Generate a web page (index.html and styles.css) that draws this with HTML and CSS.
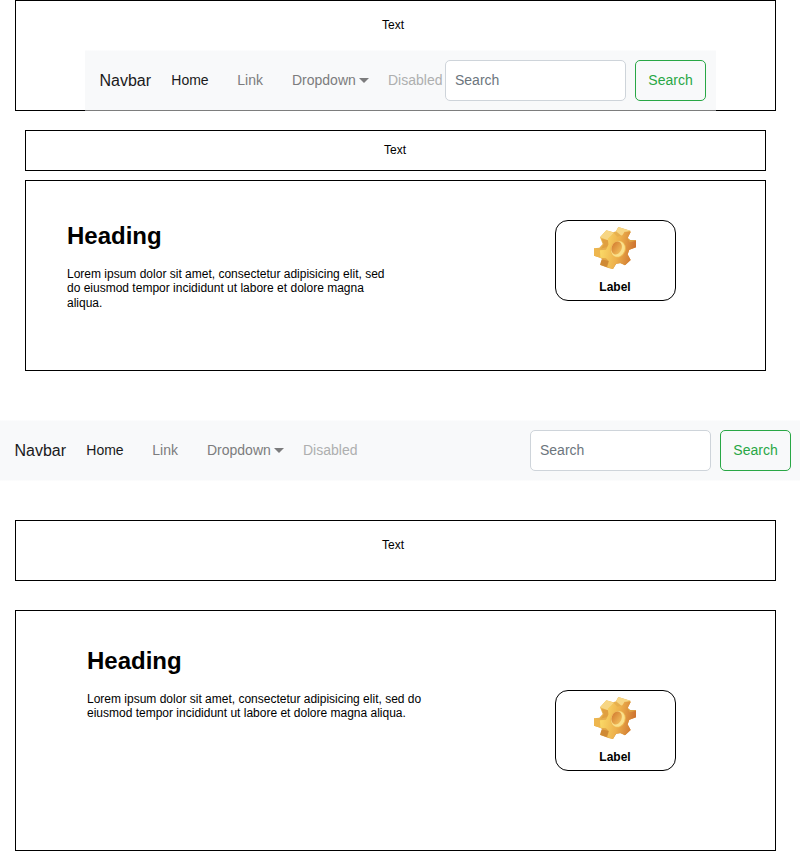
FILE: index.html
```html
<!DOCTYPE html>
<html lang="en">
<head>
<meta charset="utf-8">
<title>Wireframe</title>
<link rel="stylesheet" href="styles.css">
</head>
<body>
<svg class="defs" width="0" height="0" aria-hidden="true">
  <defs>
    <linearGradient id="face" x1="0" y1="0.4" x2="1" y2="0.6">
      <stop offset="0" stop-color="#fbdc68"/><stop offset="0.5" stop-color="#edb04c"/><stop offset="1" stop-color="#ca6c2c"/>
    </linearGradient>
    <linearGradient id="side" x1="0" y1="0" x2="1" y2="1">
      <stop offset="0" stop-color="#f3c45c"/><stop offset="1" stop-color="#d08a32"/>
    </linearGradient>
    <linearGradient id="hole" x1="0" y1="0" x2="1" y2="0.4">
      <stop offset="0" stop-color="#d27b30"/><stop offset="1" stop-color="#eeb554"/>
    </linearGradient>
    <symbol id="gear" viewBox="147 51 126 126">
      <path fill="url(#side)" d="M213 64L220 51 256 62 257 66 248 83 256 90 273 90 273 112 252 120 248 134 257 150 240 166 226 160 214 161 204 177 190 174 166 165 172 148 165 143 147 137 147 115 163 113 173 102 165 82 184 61 205 67Z"/>
      <path fill="#e0a040" d="M170 87L190 91 188 110 168 116 176 103Z"/>
      <path fill="#cf8a36" d="M170 148L191 153 185 171 165 164Z"/>
      <path fill="#eeb64e" d="M147 115L166 121 166 143 147 137Z"/>
      <path fill="#f7d684" d="M165 82L184 61 207 68 189 91ZM213 64L220 51 256 62 239 67 233 80Z"/>
      <path fill="url(#face)" d="M239 65L257 66 248 85 254 97 273 92 273 112 253 119 248 133 257 150 240 166 227 158 212 162 204 177 187 172 192 154 183 145 166 143 165 121 183 119 191 103 188 86 206 69 217 80 232 76Z"/>
      <ellipse cx="219" cy="117" rx="23" ry="26" transform="rotate(22 219 117)" fill="#efb952"/>
      <ellipse cx="219" cy="117" rx="20" ry="24" transform="rotate(22 219 117)" fill="#fae08c"/>
      <ellipse cx="215" cy="114" rx="15" ry="20" transform="rotate(22 215 114)" fill="url(#hole)"/>
    </symbol>
  </defs>
</svg>

<section class="box header">
  <p class="caption">Text</p>
  <nav class="navbar">
    <span class="brand">Navbar</span>
    <span class="link active">Home</span>
    <span class="link">Link</span>
    <span class="link">Dropdown<i class="caret"></i></span>
    <span class="link disabled">Disabled</span>
    <span class="field">Search</span>
    <span class="button">Search</span>
  </nav>
</section>

<section class="box strip"><p class="caption">Text</p></section>

<section class="box panel">
  <article class="copy">
    <h1>Heading</h1>
    <p>Lorem ipsum dolor sit amet, consectetur adipisicing elit, sed do eiusmod tempor incididunt ut labore et dolore magna aliqua.</p>
  </article>
  <div class="card"><svg class="icon"><use href="#gear"/></svg><b>Label</b></div>
</section>

<nav class="navbar full">
  <span class="brand">Navbar</span>
  <span class="link active">Home</span>
  <span class="link">Link</span>
  <span class="link">Dropdown<i class="caret"></i></span>
  <span class="link disabled">Disabled</span>
  <span class="field">Search</span>
  <span class="button">Search</span>
</nav>

<section class="box banner"><p class="caption">Text</p></section>

<section class="box panel large">
  <article class="copy">
    <h1>Heading</h1>
    <p>Lorem ipsum dolor sit amet, consectetur adipisicing elit, sed do eiusmod tempor incididunt ut labore et dolore magna aliqua.</p>
  </article>
  <div class="card"><svg class="icon"><use href="#gear"/></svg><b>Label</b></div>
</section>
</body>
</html>
```
FILE: styles.css
```css
* { box-sizing: border-box; }
html { overflow: hidden; background: #fff; }
body {
  margin: 0;
  width: 800px;
  height: 851px;
  font: 12px/14.4px "Liberation Sans", Arial, sans-serif;
  color: #000;
}
p, h1 { margin: 0; }
.defs { display: block; }

.box { border: 1px solid #000; margin-left: 15px; width: 761px; }
.caption { padding-right: 5px; text-align: center; }

.header { height: 111px; padding-top: 17px; }
.header .navbar { width: 631px; margin: 18px 0 0 69px; }
.strip { height: 41px; margin: 19px 0 0 25px; width: 741px; padding-top: 12px; }
.strip .caption { padding-right: 1px; }

.navbar {
  display: flex;
  align-items: center;
  width: 800px;
  height: 61px;
  padding: 0 10px 0 14.5px;
  font-size: 14px;
  line-height: 16px;
  white-space: nowrap;
  background: linear-gradient(rgba(248, 249, 250, .5) 1px, #f8f9fa 1px, #f8f9fa 60px, rgba(248, 249, 250, .5) 60px);
}
.navbar.full { margin-top: 49px; padding-right: 9px; }
.brand { width: 71.8px; font-size: 16px; color: #1a1a1a; }
.link { padding-bottom: 1px; color: #7c7c7d; }
.link.active { width: 66px; color: #1a1a1a; }
.link.active + .link { width: 54.7px; }
.link.active + .link + .link { width: 96px; }
.link.disabled { color: #aeafaf; }
.caret {
  display: inline-block;
  margin-left: 3px;
  border: 5px solid transparent;
  border-top-color: #7c7c7d;
  border-bottom: 0;
  vertical-align: 2px;
}
.field, .button {
  height: 41px;
  border: 1px solid #ced4da;
  border-radius: 5px;
  line-height: 39px;
}
.field { width: 181px; margin-left: auto; padding-left: 9px; background: #fff; color: #6c757d; }
.button { width: 71px; margin-left: 9px; border-color: #28a745; color: #28a745; text-align: center; }

.panel { display: flex; height: 191px; margin: 9px 0 0 25px; width: 741px; }
.copy { width: 330px; margin: 40px 0 0 41px; }
.copy h1 { font-size: 24px; line-height: 29px; margin-bottom: 17px; }
.card {
  display: flex;
  flex-direction: column;
  align-items: center;
  width: 121px;
  height: 81px;
  margin: 39px 0 0 158px;
  padding: 6px 1px 0 0;
  border: 1px solid #000;
  border-radius: 13px;
}
.icon { width: 42px; height: 42px; margin: 0 1px 11px 0; }

.banner { height: 61px; margin-top: 39px; padding-top: 17px; }
.panel.large { height: 241px; margin: 29px 0 0 15px; width: 761px; }
.large .copy { width: 340px; margin: 35px 0 0 71px; }
.large .card { margin: 79px 0 0 128px; }
```
